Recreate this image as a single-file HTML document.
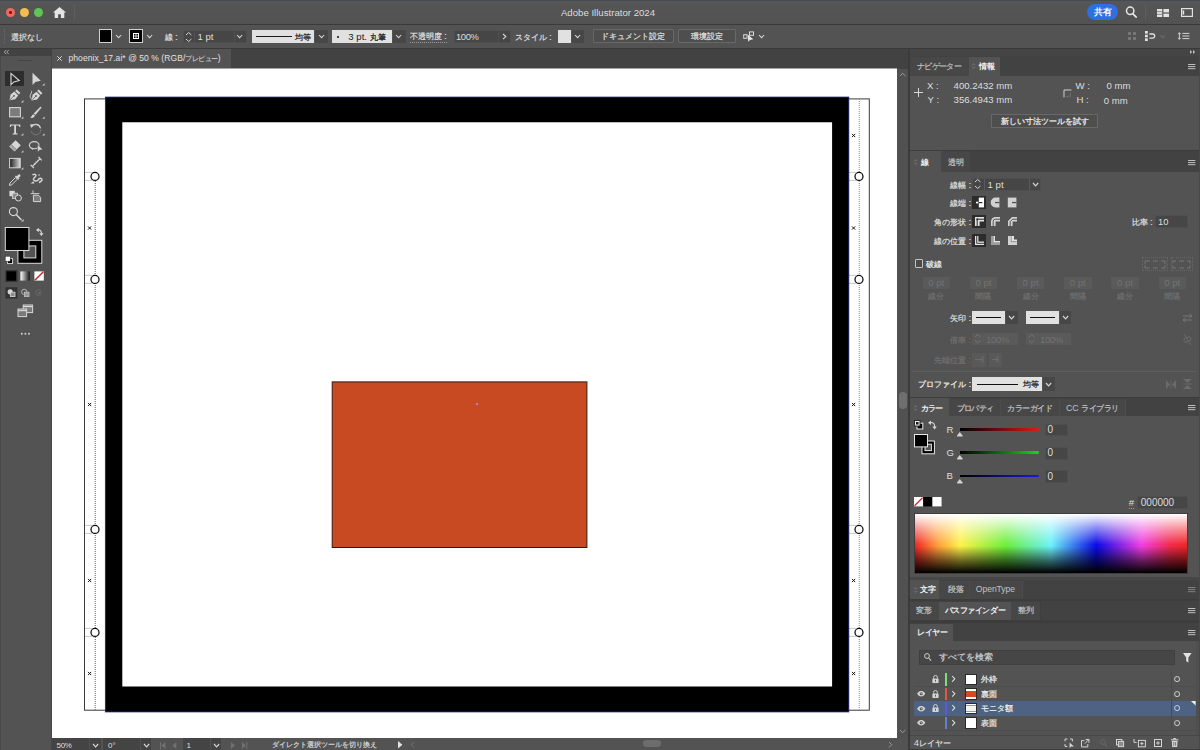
<!DOCTYPE html>
<html lang="ja">
<head>
<meta charset="utf-8">
<title>Adobe Illustrator 2024</title>
<style>
html,body{margin:0;padding:0;background:#535353;}
body{width:1200px;height:750px;overflow:hidden;position:relative;font-family:"Liberation Sans",sans-serif;font-size:9.6px;color:#dedede;line-height:1;}
#app{position:absolute;left:0;top:0;width:1200px;height:750px;overflow:hidden;background:#535353;}
.a{position:absolute;}
.t{position:absolute;white-space:nowrap;line-height:12px;height:12px;color:#dedede;}
.dim{color:#7a7a7a;}
.j{font-size:8.3px;-webkit-text-stroke:.22px;}
.b{font-weight:bold;-webkit-text-stroke:0 !important;}
.fld{position:absolute;background:#464646;border:1px solid #4f4f4f;box-sizing:border-box;}
.lt{position:absolute;background:#e1e1e1;}
.btn{position:absolute;box-sizing:border-box;border:1px solid #686868;background:#4e4e4e;}
.bar{position:absolute;background:#424242;}
.tab{position:absolute;background:#535353;}
svg{position:absolute;overflow:visible;}
.chev{position:absolute;width:5px;height:5px;}
</style>
</head>
<body>
<div id="app">

<!-- ===== TITLE BAR ===== -->
<div id="titlebar" class="a" style="left:0;top:0;width:1200px;height:24px;background:linear-gradient(#565656,#525252);">
  <div class="a" style="left:0;top:0;width:1200px;height:1px;background:#474c54;"></div>
  <!-- traffic lights -->
  <div class="a" style="left:6px;top:8px;width:9px;height:9px;border-radius:50%;background:#ee6a5f;"></div>
  <div class="a" style="left:9.4px;top:11.4px;width:2.2px;height:2.2px;border-radius:50%;background:#8a1208;"></div>
  <div class="a" style="left:20px;top:8px;width:9px;height:9px;border-radius:50%;background:#f5bd4f;"></div>
  <div class="a" style="left:34px;top:8px;width:9px;height:9px;border-radius:50%;background:#61c454;"></div>
  <!-- home -->
  <svg style="left:53px;top:7px;" width="13" height="11" viewBox="0 0 13 11"><path d="M6.5 0 L13 5.4 L11.3 5.4 L11.3 11 L7.9 11 L7.9 7.2 L5.1 7.2 L5.1 11 L1.7 11 L1.7 5.4 L0 5.4 Z" fill="#e4e4e4"/></svg>
  <div class="a" style="left:74px;top:5px;width:1px;height:15px;background:#5e5e5e;"></div>
  <div class="t" style="left:500px;width:216px;top:6.5px;text-align:center;font-size:9.65px;color:#dcdcdc;">Adobe Illustrator 2024</div>
  <!-- share -->
  <div class="a" style="left:1087px;top:4px;width:31px;height:16px;border-radius:8px;background:#2f6fe0;"></div>
  <div class="t b j" style="left:1087px;width:31px;top:6px;text-align:center;color:#fff;font-size:8.6px;">共有</div>
  <!-- search -->
  <svg style="left:1124px;top:5px;" width="16" height="15" viewBox="0 0 16 15"><circle cx="6.2" cy="5.8" r="3.7" fill="none" stroke="#e6e6e6" stroke-width="1.5"/><path d="M9 8.8 L12.2 12.2" stroke="#e6e6e6" stroke-width="1.7" stroke-linecap="round"/></svg>
  <div class="a" style="left:1145px;top:4px;width:1px;height:16px;background:#5e5e5e;"></div>
  <!-- workspace grid -->
  <svg style="left:1157px;top:8.5px;" width="12" height="8" viewBox="0 0 12 8"><rect x="0" y="0" width="5.2" height="8" fill="#e2e2e2"/><rect x="6.4" y="0" width="5.6" height="3.4" fill="#e2e2e2"/><rect x="6.4" y="4.6" width="5.6" height="3.4" fill="#e2e2e2"/><path d="M0 2.6H5.2M0 5.3H5.2" stroke="#545454" stroke-width=".6"/></svg>
  <!-- panel icon -->
  <svg style="left:1181px;top:8px;" width="12" height="9" viewBox="0 0 12 9"><rect x=".6" y=".6" width="10.8" height="7.8" fill="none" stroke="#e2e2e2" stroke-width="1.2"/><rect x="1.6" y="2.4" width="1.6" height="4.2" fill="#e2e2e2"/></svg>
</div>
<div class="a" style="left:0;top:24px;width:1200px;height:1px;background:#3a3a3a;"></div>

<!-- ===== CONTROL BAR ===== -->
<div id="controlbar" class="a" style="left:0;top:25px;width:1200px;height:23px;background:#535353;">
<!--S:control-->
<div class="a" style="left:4px;top:4px;width:1px;height:15px;background:repeating-linear-gradient(#6a6a6a 0 1px,transparent 1px 2px);"></div>
<div class="t j" style="left:10.5px;top:5.60px;">選択なし</div>
<div class="a" style="left:98.7px;top:4.2px;width:13.8px;height:13.6px;background:#000;box-sizing:border-box;border:1px solid #d0d0d0;"></div>
<svg style="left:116.00px;top:10.05px" width="5.2" height="2.7" viewBox="0 0 5.2 2.7"><path d="M0 0L2.6 2.7L5.2 0" fill="none" stroke="#d6d6d6" stroke-width="1.05"/></svg>
<div class="a" style="left:129.4px;top:4.2px;width:13.6px;height:13.6px;background:#000;box-sizing:border-box;border:1px solid #d0d0d0;"></div>
<svg style="left:133.2px;top:8px" width="6" height="6" viewBox="0 0 6 6"><rect x=".5" y=".5" width="5" height="5" fill="none" stroke="#fff" stroke-width="1"/><path d="M3 .5V5.5M.5 3H5.5" stroke="#fff" stroke-width=".8"/></svg>
<svg style="left:147.00px;top:10.05px" width="5.2" height="2.7" viewBox="0 0 5.2 2.7"><path d="M0 0L2.6 2.7L5.2 0" fill="none" stroke="#d6d6d6" stroke-width="1.05"/></svg>
<div class="t j" style="left:165px;top:5.60px;">線 :</div>
<div class="fld" style="left:183px;top:5px;width:63.5px;height:13.4px;"></div>
<div class="a" style="left:194px;top:6px;width:1px;height:11.4px;background:#525252;"></div>
<div class="a" style="left:233.5px;top:6px;width:1px;height:11.4px;background:#525252;"></div>
<svg style="left:185.6px;top:6.8px" width="5.4" height="10" viewBox="0 0 5.4 10"><path d="M0 3L2.7 .5L5.4 3M0 7L2.7 9.5L5.4 7" fill="none" stroke="#d6d6d6" stroke-width="1"/></svg>
<div class="t" style="left:197.5px;top:6.00px;font-size:9.6px;">1 pt</div>
<svg style="left:237.40px;top:10.05px" width="5.2" height="2.7" viewBox="0 0 5.2 2.7"><path d="M0 0L2.6 2.7L5.2 0" fill="none" stroke="#d6d6d6" stroke-width="1.05"/></svg>
<div class="lt" style="left:251.6px;top:5px;width:62.8px;height:13.2px;"></div>
<div class="a" style="left:256px;top:11.1px;width:35.5px;height:1.3px;background:#1a1a1a;"></div>
<div class="t j" style="left:295px;top:5.80px;color:#1c1c1c;">均等</div>
<div class="a" style="left:315.4px;top:5px;width:13px;height:13.2px;background:#474747;"></div>
<svg style="left:318.90px;top:10.05px" width="5.2" height="2.7" viewBox="0 0 5.2 2.7"><path d="M0 0L2.6 2.7L5.2 0" fill="none" stroke="#d6d6d6" stroke-width="1.05"/></svg>
<div class="lt" style="left:331.9px;top:5px;width:60px;height:13.2px;"></div>
<div class="a" style="left:337.2px;top:10.6px;width:2px;height:2px;border-radius:50%;background:#111;"></div>
<div class="t" style="left:348.3px;top:5.80px;color:#1c1c1c;font-size:9.6px;">3 pt. <span class="j">丸筆</span></div>
<div class="a" style="left:392.9px;top:5px;width:13px;height:13.2px;background:#474747;"></div>
<svg style="left:396.40px;top:10.05px" width="5.2" height="2.7" viewBox="0 0 5.2 2.7"><path d="M0 0L2.6 2.7L5.2 0" fill="none" stroke="#d6d6d6" stroke-width="1.05"/></svg>
<div class="t j" style="left:410px;top:5.60px;border-bottom:1px dotted #9a9a9a;height:11.4px;line-height:11.4px;">不透明度 :</div>
<div class="fld" style="left:453.7px;top:5px;width:57px;height:13.4px;"></div>
<div class="a" style="left:497.5px;top:6px;width:1px;height:11.4px;background:#525252;"></div>
<div class="t" style="left:456px;top:6.00px;font-size:9.4px;letter-spacing:-.35px;">100%</div>
<svg style="left:502.90px;top:8.80px" width="2.8" height="5.2" viewBox="0 0 2.8 5.2"><path d="M0 0L2.8 2.6L0 5.2" fill="none" stroke="#d6d6d6" stroke-width="1.15"/></svg>
<div class="t j" style="left:515px;top:5.60px;">スタイル :</div>
<div class="lt" style="left:557.7px;top:5px;width:13.6px;height:13.2px;"></div>
<div class="a" style="left:572.3px;top:5px;width:12px;height:13.2px;background:#474747;"></div>
<svg style="left:575.30px;top:10.05px" width="5.2" height="2.7" viewBox="0 0 5.2 2.7"><path d="M0 0L2.6 2.7L5.2 0" fill="none" stroke="#d6d6d6" stroke-width="1.05"/></svg>
<div class="btn" style="left:592.5px;top:4.3px;width:81.3px;height:14px;border-radius:1px;"></div>
<div class="t j" style="left:592.5px;top:5.30px;width:81.3px;text-align:center;">ドキュメント設定</div>
<div class="btn" style="left:677.5px;top:4.3px;width:58.2px;height:14px;border-radius:1px;"></div>
<div class="t j" style="left:677.5px;top:5.30px;width:58.2px;text-align:center;">環境設定</div>
<svg style="left:743px;top:5.6px" width="13" height="12" viewBox="743 30.6 13 12"><rect x="743.7" y="34.3" width="3.3" height="3.6" fill="none" stroke="#d8d8d8" stroke-width="1"/><rect x="749.5" y="31.5" width="4" height="3.4" fill="none" stroke="#d8d8d8" stroke-width="1"/><path d="M747.7 34.2L748.2 41.4L750 39.6L753.3 38.9Z" fill="#e4e4e4"/></svg>
<svg style="left:759.20px;top:9.55px" width="5.2" height="2.7" viewBox="0 0 5.2 2.7"><path d="M0 0L2.6 2.7L5.2 0" fill="none" stroke="#d6d6d6" stroke-width="1.05"/></svg>
<svg style="left:1127.8px;top:7px" width="8" height="8" viewBox="0 0 8 8"><g fill="#767676"><rect x="0" y="0" width="3" height="3"/><rect x="5" y="0" width="3" height="3"/><rect x="0" y="5" width="3" height="3"/><rect x="5" y="5" width="3" height="3"/></g></svg>
<svg style="left:1144.6px;top:6px" width="11" height="11" viewBox="0 0 11 11"><g fill="#e2e2e2"><rect x="0" y="0" width="2.8" height="2.6"/><rect x="0" y="3.7" width="2.8" height="2.6"/><rect x="0" y="7.4" width="2.8" height="2.6"/></g><path d="M4.4 3H7.6A2.1 2.1 0 0 1 7.6 7.2H4.4" fill="none" stroke="#e2e2e2" stroke-width="1.3"/></svg>
<svg style="left:1160.40px;top:9.95px" width="5.2" height="2.7" viewBox="0 0 5.2 2.7"><path d="M0 0L2.6 2.7L5.2 0" fill="none" stroke="#6c6c6c" stroke-width="1.05"/></svg>
<svg style="left:1177px;top:6.6px" width="13" height="9" viewBox="1177 31.6 13 9"><path d="M1182.4 33H1189.4M1182.4 35.6H1189.4M1182.4 38.2H1189.4" stroke="#dcdcdc" stroke-width=".95"/><path d="M1179.4 32.4V38.8" stroke="#dcdcdc" stroke-width=".9"/><path d="M1178 33.8L1179.4 32.2L1180.8 33.8M1178 37.4L1179.4 39L1180.8 37.4" fill="none" stroke="#dcdcdc" stroke-width=".8"/></svg>
<!--E:control-->
</div>
<div class="a" style="left:0;top:48px;width:1200px;height:1px;background:#3a3a3a;"></div>

<!-- ===== TOOLS PANEL ===== -->
<div id="tools" class="a" style="left:0;top:49px;width:52px;height:701px;background:#535353;">
<!--S:tools-->
<div class="a" style="left:0;top:0;width:52px;height:7.4px;background:#424242;"></div>
<svg style="left:4.2px;top:1.4px" width="5" height="4.2" viewBox="0 0 5 4.2"><path d="M2.2 0L.3 2.1L2.2 4.2M4.7 0L2.8 2.1L4.7 4.2" fill="none" stroke="#bdbdbd" stroke-width=".8"/></svg>
<div class="a" style="left:0;top:7.4px;width:1px;height:694px;background:#494949;"></div>
<div class="a" style="left:50.6px;top:7.4px;width:1.4px;height:694px;background:#484848;"></div>
<div class="a" style="left:18.4px;top:10.6px;width:13.4px;height:1.8px;background:#454545;"></div>
<div class="a" style="left:5.2px;top:22.4px;width:19px;height:14.6px;background:#2d2d2d;"></div>
<svg style="left:0;top:0" width="52" height="701" viewBox="0 49 52 701"><defs><linearGradient id="tg" x1="0" x2="1" y1="0" y2="0"><stop offset="0" stop-color="#1a1a1a"/><stop offset="1" stop-color="#d8d8d8"/></linearGradient><linearGradient id="tg2" x1="0" x2="1" y1="0" y2="0"><stop offset="0" stop-color="#fff"/><stop offset="1" stop-color="#111"/></linearGradient></defs><path d="M11 73.4V84.7L13.9 81.9L19.2 80.5Z" fill="none" stroke="#d6d6d6" stroke-width="1.15" stroke-linejoin="miter"/>
<path d="M32.5 72.8V84.9L35.4 82L40.8 80.7Z" fill="#d6d6d6"/>
<path d="M44.6 85.6L44.6 83.19999999999999L42.2 85.6Z" fill="#cfcfcf"/>
<g transform="translate(0 0)"><path d="M9.5 100.3L10.6 94.6L14.4 91.6L18.2 95.4L15.2 99.2Z" fill="#d6d6d6"/><path d="M15.2 90.9L16.7 89.4L20.4 93.1L18.9 94.6Z" fill="#d6d6d6"/><path d="M9.9 99.9L13.6 96.2" stroke="#535353" stroke-width=".8"/><circle cx="14" cy="95.8" r=".9" fill="#535353"/></g>
<path d="M23.4 102.4L23.4 100.0L21.0 102.4Z" fill="#cfcfcf"/>
<g transform="translate(22 0.2)"><path d="M9.5 100.3L10.6 94.6L14.4 91.6L18.2 95.4L15.2 99.2Z" fill="#d6d6d6"/><path d="M15.2 90.9L16.7 89.4L20.4 93.1L18.9 94.6Z" fill="#d6d6d6"/><path d="M9.9 99.9L13.6 96.2" stroke="#535353" stroke-width=".8"/><circle cx="14" cy="95.8" r=".9" fill="#535353"/></g>
<path d="M31.2 90.8C33 92.4 29 95 30.4 97.4C31 98.6 31.8 99 32.2 99.6" fill="none" stroke="#d6d6d6" stroke-width="1"/>
<rect x="9.6" y="107.6" width="10.8" height="9.2" fill="#7b7b7b" stroke="#d6d6d6" stroke-width="1.1"/>
<path d="M23.4 118.8L23.4 116.39999999999999L21.0 118.8Z" fill="#cfcfcf"/>
<path d="M40.6 106.6L41.6 107.6L35.4 115L33.8 113.6Z" fill="#d6d6d6"/><path d="M33.4 114.2L34.9 115.6C34.4 117.6 32.4 118.4 30.4 117.8C31.6 117 31.6 115 33.4 114.2Z" fill="#d6d6d6"/>
<path d="M44.6 118.8L44.6 116.39999999999999L42.2 118.8Z" fill="#cfcfcf"/>
<path d="M9.9 124.4H20.3V127H19.3C19.1 125.9 18.6 125.6 17.6 125.6H16V132.6C16 133.3 16.4 133.5 17.6 133.6V134.4H12.6V133.6C13.8 133.5 14.2 133.3 14.2 132.6V125.6H12.6C11.6 125.6 11.1 125.9 10.9 127H9.9Z" fill="#d6d6d6"/>
<path d="M23.4 135.6L23.4 133.2L21.0 135.6Z" fill="#cfcfcf"/>
<path d="M32.6 126.6A4.8 4.8 0 1 1 31.3 131" fill="none" stroke="#9a9a9a" stroke-width="1" stroke-dasharray="1.2 1"/><path d="M31.6 126.4A4.9 4.9 0 0 1 40.4 128" fill="none" stroke="#d6d6d6" stroke-width="1.2"/><path d="M30.2 124.2L34.2 124.6L31 128Z" fill="#d6d6d6"/>
<path d="M44.6 135.6L44.6 133.2L42.2 135.6Z" fill="#cfcfcf"/>
<path d="M15.6 140.2L20.8 145.2L14.6 151.6L9.2 146.6Z" fill="#d6d6d6"/><path d="M11.2 144.8L16.4 149.8" stroke="#535353" stroke-width=".9"/><path d="M9.9 146.6L14.6 151L16 149.6L11.3 145.2Z" fill="#a8a8a8"/>
<path d="M23.4 152.6L23.4 150.2L21.0 152.6Z" fill="#cfcfcf"/>
<ellipse cx="34.2" cy="145.2" rx="4.8" ry="3.6" fill="none" stroke="#d6d6d6" stroke-width="1.1"/><path d="M31.8 147.6C31 148.6 31.8 149.6 33 149.2" fill="none" stroke="#d6d6d6" stroke-width=".9"/><path d="M37.6 144.6V152L39.4 150.2L42.8 149.6Z" fill="#d6d6d6" stroke="#535353" stroke-width=".5"/>
<rect x="9.6" y="158.4" width="10.6" height="9.4" fill="url(#tg)" stroke="#d6d6d6" stroke-width="1"/>
<path d="M23.4 169.6L23.4 167.2L21.0 169.6Z" fill="#cfcfcf"/>
<path d="M32.2 166.6L40.2 158.6" stroke="#d6d6d6" stroke-width="1.3"/><path d="M30.6 164.8L34 168.2M38.4 157L41.8 160.4" stroke="#d6d6d6" stroke-width="1.2"/><path d="M34 163L35.2 164.2M35.6 161.4L36.8 162.6M37.2 159.8L38.4 161" stroke="#d6d6d6" stroke-width=".7"/>
<path d="M9.4 185.4L10 183L15.4 177.6L17.2 179.4L11.8 184.8Z" fill="none" stroke="#d6d6d6" stroke-width="1"/><path d="M15 176.4L18.4 179.8L19.4 178.8L18.6 178L20.4 176.2C21 175.4 19.6 173.6 18.6 174.4L16.8 176.2L16 175.4Z" fill="#d6d6d6"/>
<path d="M33 174.6C35 173.4 36.6 175 35.6 176.4C34.4 178 33.2 178.2 33.4 179.4C33.8 181.4 37.4 181.6 38.6 179.4C39.4 178 41.8 177.8 42 179.6C42.2 181.4 40 181.4 39.6 182.4" fill="none" stroke="#d6d6d6" stroke-width="1.5" stroke-linecap="round"/><path d="M30.4 183.6L33.6 181.2L34.4 183.4Z" fill="#d6d6d6"/><circle cx="39" cy="175" r=".8" fill="#d6d6d6"/>
<rect x="9.4" y="190.8" width="5.4" height="5.4" fill="#d6d6d6"/><rect x="12.4" y="193.2" width="5.2" height="5.2" fill="#8a8a8a" stroke="#d6d6d6" stroke-width=".8"/><circle cx="18.4" cy="198" r="3" fill="#535353" stroke="#d6d6d6" stroke-width="1"/>
<path d="M30.6 193.6H39.4M33 190.4V193.6" stroke="#d6d6d6" stroke-width=".9"/><path d="M33.4 195.2H38.4L40.6 197.4V201.6H33.4Z" fill="#7d7d7d" stroke="#d6d6d6" stroke-width="1"/>
<circle cx="13.4" cy="211.6" r="4" fill="none" stroke="#d6d6d6" stroke-width="1.15"/><path d="M16.4 214.8L21 219.6" stroke="#d6d6d6" stroke-width="1.5" stroke-linecap="round"/>
<path d="M23.6 221.4L23.6 219.0L21.200000000000003 221.4Z" fill="#cfcfcf"/>
<rect x="17.9" y="240.3" width="23.9" height="23" fill="#000" stroke="#dadada" stroke-width="1"/><rect x="23.9" y="245.9" width="11.9" height="12" fill="#535353" stroke="#dadada" stroke-width="1"/>
<rect x="5.3" y="227.5" width="23.6" height="23" fill="#000" stroke="#dadada" stroke-width="1"/>
<path d="M37.6 230C40.6 229.6 41.6 231.4 41.4 233.6" fill="none" stroke="#d6d6d6" stroke-width="1.2"/><path d="M36 230L38.8 227.8V232.2Z" fill="#d6d6d6"/><path d="M41.4 236L39.2 233.2H43.6Z" fill="#d6d6d6"/>
<rect x="7.6" y="258.6" width="5" height="5" fill="#000" stroke="#e0e0e0" stroke-width=".9"/><rect x="5.2" y="256.2" width="5" height="5" fill="#fff" stroke="#222" stroke-width=".5"/>
<rect x="5.4" y="270.2" width="12" height="11.6" fill="#2f2f2f"/><rect x="6.6" y="271.4" width="9.4" height="9.2" fill="#000"/>
<rect x="20.4" y="271.4" width="9.4" height="9.2" fill="url(#tg2)"/>
<rect x="34.4" y="271.4" width="9.4" height="9.2" fill="#fff"/><path d="M34.8 280.2L43.4 271.8" stroke="#d02020" stroke-width="1.4"/>
<rect x="5.4" y="287.2" width="12" height="11.4" fill="#333"/>
<circle cx="10.2" cy="291.8" r="2.6" fill="#d6d6d6"/><rect x="10.4" y="292.2" width="4.6" height="4.4" fill="#8c8c8c" stroke="#d6d6d6" stroke-width=".8"/>
<circle cx="24.2" cy="291.8" r="2.6" fill="none" stroke="#bdbdbd" stroke-width=".9"/><rect x="24.4" y="292.2" width="4.6" height="4.4" fill="#9a9a9a" stroke="#bdbdbd" stroke-width=".8"/>
<circle cx="38.4" cy="292.6" r="2.8" fill="none" stroke="#6a6a6a" stroke-width=".9"/><circle cx="39.2" cy="293" r="1.2" fill="#666"/>
<rect x="23.2" y="305" width="9.4" height="7.6" fill="#7a7a7a" stroke="#d6d6d6" stroke-width="1"/><path d="M23.2 306.6H32.6" stroke="#d6d6d6" stroke-width="1.2"/><rect x="18" y="309" width="8.6" height="7.6" fill="#7a7a7a" stroke="#d6d6d6" stroke-width="1"/><path d="M18 310.6H26.6" stroke="#d6d6d6" stroke-width="1.2"/>
<circle cx="21.8" cy="333.8" r=".95" fill="#d6d6d6"/>
<circle cx="25.4" cy="333.8" r=".95" fill="#d6d6d6"/>
<circle cx="29" cy="333.8" r=".95" fill="#d6d6d6"/></svg>
<!--E:tools-->
</div>

<!-- ===== DOCUMENT AREA ===== -->
<div id="doctabs" class="bar" style="left:52px;top:49px;width:856px;height:20px;">
<!--S:doctabs-->
<div class="tab" style="left:0;top:0;width:178.6px;height:20px;"></div>
<svg style="left:5.4px;top:7px" width="5" height="5" viewBox="0 0 5 5"><path d="M.3 .3L4.7 4.7M4.7 .3L.3 4.7" stroke="#e0e0e0" stroke-width="1"/></svg>
<div class="t" style="left:16.5px;top:3.4px;font-size:8.5px;letter-spacing:.07px;color:#e2e2e2;">phoenix_17.ai* @ 50 % (RGB/<span style="font-size:7.4px;letter-spacing:-.5px;">プレビュー</span>)</div>
<!--E:doctabs-->
</div>
<!--S:docchrome-->
<div class="a" style="left:52px;top:68px;width:845px;height:1px;background:#a4a4a4;"></div>
<div class="a" style="left:897px;top:69px;width:11px;height:669px;background:#515151;"></div>
<svg style="left:899.8px;top:73.4px" width="5.4" height="3" viewBox="0 0 5.4 3"><path d="M0 3L2.7 .3L5.4 3" fill="none" stroke="#9a9a9a" stroke-width="1"/></svg>
<svg style="left:900.2px;top:729.6px" width="5.4" height="3" viewBox="0 0 5.4 3"><path d="M0 0L2.7 2.7L5.4 0" fill="none" stroke="#9a9a9a" stroke-width="1"/></svg>
<div class="a" style="left:898.6px;top:392px;width:8px;height:17px;border-radius:4px;background:#6f6f6f;"></div>
<div class="a" style="left:52px;top:738px;width:856px;height:12px;background:#535353;"></div>
<div class="a" style="left:52px;top:738px;width:49px;height:12px;background:#444;"></div>
<div class="a" style="left:103px;top:738px;width:48px;height:12px;background:#444;"></div>
<div class="a" style="left:182.5px;top:738px;width:38.5px;height:12px;background:#444;"></div>
<div class="a" style="left:88.5px;top:738px;width:1px;height:12px;background:#505050;"></div>
<div class="a" style="left:140px;top:738px;width:1px;height:12px;background:#505050;"></div>
<div class="a" style="left:210px;top:738px;width:1px;height:12px;background:#505050;"></div>
<div class="t" style="left:56.5px;top:739.8px;font-size:8px;letter-spacing:-.3px;">50%</div>
<svg style="left:93.20px;top:744.00px" width="5.2" height="2.8" viewBox="0 0 5.2 2.8"><path d="M0 0L2.6 2.8L5.2 0" fill="none" stroke="#d6d6d6" stroke-width="1.15"/></svg>
<div class="t" style="left:108px;top:739.8px;font-size:8px;">0°</div>
<svg style="left:144.20px;top:744.00px" width="5.2" height="2.8" viewBox="0 0 5.2 2.8"><path d="M0 0L2.6 2.8L5.2 0" fill="none" stroke="#d6d6d6" stroke-width="1.15"/></svg>
<div class="t" style="left:186.6px;top:739.8px;font-size:8px;">1</div>
<svg style="left:214.40px;top:744.00px" width="5.2" height="2.8" viewBox="0 0 5.2 2.8"><path d="M0 0L2.6 2.8L5.2 0" fill="none" stroke="#d6d6d6" stroke-width="1.15"/></svg>
<svg style="left:160px;top:742px" width="18" height="7" viewBox="0 0 18 7"><g fill="#707070"><rect x="0" y="0" width="1" height="7"/><path d="M5.4 0V7L1.4 3.5Z"/><path d="M16.4 0V7L12.4 3.5Z"/></g></svg>
<svg style="left:230px;top:742px" width="18" height="7" viewBox="0 0 18 7"><g fill="#707070"><path d="M1 0V7L5 3.5Z"/><path d="M12 0V7L16 3.5Z"/><rect x="16.4" y="0" width="1" height="7"/></g></svg>
<div class="t j" style="left:271.5px;top:739.2px;font-size:6.9px;color:#d2d2d2;">ダイレクト選択ツールを切り換え</div>
<svg style="left:397.6px;top:741.4px" width="4.4" height="7.4" viewBox="0 0 4.4 7.4"><path d="M0 0V7.4L4.4 3.7Z" fill="#e4e4e4"/></svg>
<svg style="left:410.6px;top:742.4px" width="3" height="5.4" viewBox="0 0 3 5.4"><path d="M3 0L.3 2.7L3 5.4" fill="none" stroke="#727272" stroke-width="1"/></svg>
<div class="a" style="left:642.5px;top:740px;width:18px;height:7.4px;border-radius:3.7px;background:#6d6d6d;"></div>
<svg style="left:888.6px;top:741.6px" width="3" height="5.4" viewBox="0 0 3 5.4"><path d="M0 0L2.7 2.7L0 5.4" fill="none" stroke="#9a9a9a" stroke-width="1"/></svg>
<!--E:docchrome-->
<div id="canvas" class="a" style="left:52px;top:69px;width:845px;height:669px;background:#fff;overflow:hidden;">
<svg style="left:0;top:0;" width="845" height="667" viewBox="0 0 845 667">
<rect x="32.5" y="29.900000000000006" width="784.8" height="611.3000000000001" fill="none" stroke="#3a3a3a" stroke-width="1"/>
<path d="M43.2 108V641" stroke="#6c6c6c" stroke-width="1.1" stroke-dasharray="1 1"/>
<path d="M807.3 30V641" stroke="#93a2a4" stroke-width="1.2" stroke-dasharray="1 1"/>
<path d="M33.5 103.4H40" stroke="#777" stroke-width=".8" stroke-dasharray="1 1"/>
<path d="M797.5 103.4H804" stroke="#777" stroke-width=".8" stroke-dasharray="1 1"/>
<path d="M33.5 111.4H40" stroke="#777" stroke-width=".8" stroke-dasharray="1 1"/>
<path d="M797.5 111.4H804" stroke="#777" stroke-width=".8" stroke-dasharray="1 1"/>
<path d="M33.5 206.39999999999998H40" stroke="#777" stroke-width=".8" stroke-dasharray="1 1"/>
<path d="M797.5 206.39999999999998H804" stroke="#777" stroke-width=".8" stroke-dasharray="1 1"/>
<path d="M33.5 214.39999999999998H40" stroke="#777" stroke-width=".8" stroke-dasharray="1 1"/>
<path d="M797.5 214.39999999999998H804" stroke="#777" stroke-width=".8" stroke-dasharray="1 1"/>
<path d="M33.5 456.4H40" stroke="#777" stroke-width=".8" stroke-dasharray="1 1"/>
<path d="M797.5 456.4H804" stroke="#777" stroke-width=".8" stroke-dasharray="1 1"/>
<path d="M33.5 464.4H40" stroke="#777" stroke-width=".8" stroke-dasharray="1 1"/>
<path d="M797.5 464.4H804" stroke="#777" stroke-width=".8" stroke-dasharray="1 1"/>
<path d="M33.5 559.4H40" stroke="#777" stroke-width=".8" stroke-dasharray="1 1"/>
<path d="M797.5 559.4H804" stroke="#777" stroke-width=".8" stroke-dasharray="1 1"/>
<path d="M33.5 567.4H40" stroke="#777" stroke-width=".8" stroke-dasharray="1 1"/>
<path d="M797.5 567.4H804" stroke="#777" stroke-width=".8" stroke-dasharray="1 1"/>
<path fill-rule="evenodd" fill="#000" d="M53.30 28.00H796.90V643.00H53.30Z M70.30 53.30H780.10V617.40H70.30Z"/>
<rect x="53.40" y="28.10" width="743.40" height="614.80" fill="none" stroke="#23297a" stroke-width=".9"/>
<circle cx="43" cy="107.4" r="4" fill="#fff" stroke="#0a0a0a" stroke-width="1.25"/>
<circle cx="807" cy="107.4" r="4" fill="#fff" stroke="#0a0a0a" stroke-width="1.25"/>
<circle cx="43" cy="210.39999999999998" r="4" fill="#fff" stroke="#0a0a0a" stroke-width="1.25"/>
<circle cx="807" cy="210.39999999999998" r="4" fill="#fff" stroke="#0a0a0a" stroke-width="1.25"/>
<circle cx="43" cy="460.4" r="4" fill="#fff" stroke="#0a0a0a" stroke-width="1.25"/>
<circle cx="807" cy="460.4" r="4" fill="#fff" stroke="#0a0a0a" stroke-width="1.25"/>
<circle cx="43" cy="563.4" r="4" fill="#fff" stroke="#0a0a0a" stroke-width="1.25"/>
<circle cx="807" cy="563.4" r="4" fill="#fff" stroke="#0a0a0a" stroke-width="1.25"/>
<path d="M35.99999999999999 157.4L39.199999999999996 160.6M39.199999999999996 157.4L35.99999999999999 160.6" stroke="#111" stroke-width="1"/>
<path d="M35.99999999999999 333.9L39.199999999999996 337.1M39.199999999999996 333.9L35.99999999999999 337.1" stroke="#111" stroke-width="1"/>
<path d="M35.99999999999999 509.9L39.199999999999996 513.1M39.199999999999996 509.9L35.99999999999999 513.1" stroke="#111" stroke-width="1"/>
<path d="M35.99999999999999 602.9L39.199999999999996 606.1M39.199999999999996 602.9L35.99999999999999 606.1" stroke="#111" stroke-width="1"/>
<path d="M800.0 64.9L803.2 68.1M803.2 64.9L800.0 68.1" stroke="#111" stroke-width="1"/>
<path d="M800.0 157.4L803.2 160.6M803.2 157.4L800.0 160.6" stroke="#111" stroke-width="1"/>
<path d="M800.0 333.9L803.2 337.1M803.2 333.9L800.0 337.1" stroke="#111" stroke-width="1"/>
<path d="M800.0 509.9L803.2 513.1M803.2 509.9L800.0 513.1" stroke="#111" stroke-width="1"/>
<path d="M800.0 602.9L803.2 606.1M803.2 602.9L800.0 606.1" stroke="#111" stroke-width="1"/>
<rect x="280.2" y="312.9" width="254.7" height="165.60000000000002" fill="#c74a22" stroke="#3a160a" stroke-width="1"/>
<circle cx="425.1" cy="335.2" r="1.1" fill="#a88ad0"/>
</svg>
</div>

<!-- ===== RIGHT DOCK ===== -->
<div id="dock" class="a" style="left:908px;top:49px;width:292px;height:701px;background:#535353;">
<!--S:dock-->
<div class="a" style="left:0.00px;top:0.00px;width:2.00px;height:701.00px;background:#3b3b3b;"></div>
<div class="a" style="left:291.00px;top:0.00px;width:1.00px;height:701.00px;background:#484848;"></div>
<div class="a" style="left:2.00px;top:0.00px;width:289.00px;height:7.00px;background:#454545;"></div>
<svg style="left:282.00px;top:1.40px" width="5.4" height="4" viewBox="0 0 5.4 4"><path d="M0 0L2.2 2L0 4ZM3 0L5.2 2L3 4Z" fill="#bdbdbd"/></svg>
<div class="a" style="left:2.00px;top:7.00px;width:289.00px;height:19.50px;background:#424242;"></div>
<div class="a" style="left:2.00px;top:8.00px;width:58.50px;height:18.50px;background:#474747;"></div>
<div class="a" style="left:60.50px;top:8.00px;width:31.30px;height:18.50px;background:#535353;"></div>
<div class="t j" style="left:9.00px;top:11.20px;color:#bdbdbd;letter-spacing:-.67px;">ナビゲーター</div>
<svg style="left:63.80px;top:14.20px" width="3.2" height="6" viewBox="0 0 3.2 6"><path d="M.3 2.2L1.6 .6L2.9 2.2M.3 3.8L1.6 5.4L2.9 3.8" fill="none" stroke="#8e8e8e" stroke-width=".6"/></svg>
<div class="t j b" style="left:70.60px;top:11.20px;color:#f0f0f0;">情報</div>
<svg style="left:280.00px;top:15.00px" width="7.4" height="5.2" viewBox="0 0 7.4 5.2"><path d="M0 .5H7.4M0 2.6H7.4M0 4.7H7.4" stroke="#cfcfcf" stroke-width=".9"/></svg>
<svg style="left:6.00px;top:39.00px" width="9" height="9" viewBox="0 0 9 9"><path d="M4.5 0V9M0 4.5H9" stroke="#d8d8d8" stroke-width="1"/></svg>
<div class="t" style="left:19.00px;top:30.70px;">X :</div>
<div class="t" style="left:19.60px;top:44.50px;">Y :</div>
<div class="t" style="left:45.60px;top:30.70px;">400.2432 mm</div>
<div class="t" style="left:45.60px;top:44.50px;">356.4943 mm</div>
<svg style="left:154.60px;top:39.60px" width="8.4" height="8.4" viewBox="0 0 8.4 8.4"><path d="M1 8.4V1H8.4" fill="none" stroke="#d0d0d0" stroke-width="1"/><path d="M3.4 7.4H7.4V3.4" fill="none" stroke="#9a9a9a" stroke-width=".7" stroke-dasharray="1 1"/></svg>
<div class="t" style="left:167.60px;top:30.70px;">W :</div>
<div class="t" style="left:168.40px;top:45.40px;">H :</div>
<div class="t" style="left:198.60px;top:30.90px;">0 mm</div>
<div class="t" style="left:195.80px;top:45.60px;">0 mm</div>
<div class="btn" style="left:83.20px;top:64.60px;width:106.60px;height:14.00px;"></div>
<div class="t j" style="left:76.50px;width:120px;text-align:center;top:65.70px;color:#f0f0f0;font-size:8.4px;">新しい寸法ツールを試す</div>
<div class="a" style="left:2.00px;top:101.00px;width:289.00px;height:1.40px;background:#3d3d3d;"></div>
<div class="a" style="left:2.00px;top:102.40px;width:289.00px;height:20.20px;background:#424242;"></div>
<div class="a" style="left:33.40px;top:102.40px;width:28.90px;height:20.20px;background:#474747;"></div>
<div class="a" style="left:2.00px;top:102.00px;width:31.40px;height:20.60px;background:#535353;"></div>
<svg style="left:6.00px;top:109.80px" width="3.2" height="6" viewBox="0 0 3.2 6"><path d="M.3 2.2L1.6 .6L2.9 2.2M.3 3.8L1.6 5.4L2.9 3.8" fill="none" stroke="#8e8e8e" stroke-width=".6"/></svg>
<div class="t j b" style="left:12.60px;top:106.80px;color:#f0f0f0;">線</div>
<div class="t j" style="left:40.00px;top:106.80px;color:#bdbdbd;">透明</div>
<svg style="left:280.00px;top:111.00px" width="7.4" height="5.2" viewBox="0 0 7.4 5.2"><path d="M0 .5H7.4M0 2.6H7.4M0 4.7H7.4" stroke="#cfcfcf" stroke-width=".9"/></svg>
<div class="t j" style="left:-57.00px;width:120px;text-align:right;top:129.60px;">線幅 :</div>
<div class="fld" style="left:64.40px;top:128.60px;width:69.00px;height:13.20px;"></div>
<div class="a" style="left:75.60px;top:129.60px;width:1.00px;height:11.20px;background:#5a5a5a;"></div>
<div class="a" style="left:120.60px;top:129.60px;width:1.00px;height:11.20px;background:#5a5a5a;"></div>
<svg style="left:67.20px;top:130.20px" width="5.4" height="10" viewBox="0 0 5.4 10"><path d="M0 3L2.7 .5L5.4 3M0 7L2.7 9.5L5.4 7" fill="none" stroke="#d6d6d6" stroke-width="1"/></svg>
<div class="t" style="left:79.60px;top:129.90px;font-size:9.6px;">1 pt</div>
<svg style="left:124.60px;top:134.20px" width="5.2" height="2.8" viewBox="0 0 5.2 2.8"><path d="M0 0L2.6 2.8L5.2 0" fill="none" stroke="#d6d6d6" stroke-width="1.15"/></svg>
<div class="t j" style="left:-57.00px;width:120px;text-align:right;top:147.60px;">線端 :</div>
<div class="a" style="left:64.40px;top:147.00px;width:13.4px;height:13.4px;background:#2c2c2c;"></div><svg style="left:66.60px;top:149.20px" width="9" height="9" viewBox="0 0 9 9"><rect x="3.8" y="-.4" width="5.2" height="9.8" fill="#fff"/><rect x="3.8" y="4" width="3.6" height="1.2" fill="#2c2c2c"/><rect x="1" y="3.7" width="2.2" height="1.7" fill="#fff"/></svg>
<div class="a" style="left:81.00px;top:147.00px;width:13.4px;height:13.4px;background:transparent;"></div><svg style="left:83.20px;top:149.20px" width="9" height="9" viewBox="0 0 9 9"><path d="M8.4 -.4H4.6A4.9 4.9 0 0 0 4.6 9.4H8.4Z" fill="#d2d2d2"/><rect x="4" y="3.9" width="4.4" height="1.3" fill="#535353"/></svg>
<div class="a" style="left:97.40px;top:147.00px;width:13.4px;height:13.4px;background:transparent;"></div><svg style="left:99.60px;top:149.20px" width="9" height="9" viewBox="0 0 9 9"><rect x="-.2" y="-.4" width="8.6" height="9.8" fill="#d2d2d2"/><rect x="4" y="3.9" width="4.4" height="1.3" fill="#535353"/></svg>
<div class="t j" style="left:-57.00px;width:120px;text-align:right;top:166.60px;">角の形状 :</div>
<div class="a" style="left:64.40px;top:166.00px;width:13.4px;height:13.4px;background:#2c2c2c;"></div><svg style="left:66.60px;top:168.20px" width="9" height="9" viewBox="0 0 9 9"><path d="M0 0H9V4.6H4.6V9H0Z" fill="#e2e2e2"/><path d="M2.2 9V2.2H9" fill="none" stroke="#2c2c2c" stroke-width="1"/><rect x="1.4" y="1.4" width="1.8" height="1.8" fill="#2c2c2c"/></svg>
<div class="a" style="left:81.00px;top:166.00px;width:13.4px;height:13.4px;background:transparent;"></div><svg style="left:83.20px;top:168.20px" width="9" height="9" viewBox="0 0 9 9"><path d="M9 0H4.6A4.6 4.6 0 0 0 0 4.6V9H4.6V4.6H9Z" fill="#d2d2d2"/><path d="M2.2 9V4.4A2.2 2.2 0 0 1 4.4 2.2H9" fill="none" stroke="#535353" stroke-width="1"/></svg>
<div class="a" style="left:97.40px;top:166.00px;width:13.4px;height:13.4px;background:transparent;"></div><svg style="left:99.60px;top:168.20px" width="9" height="9" viewBox="0 0 9 9"><path d="M9 0H4L0 4V9H4.6V4.6H9Z" fill="#d2d2d2"/><path d="M2.2 9V4.6L4.6 2.2H9" fill="none" stroke="#535353" stroke-width="1"/></svg>
<div class="t j" style="left:124.60px;width:120px;text-align:right;top:166.60px;">比率 :</div>
<div class="fld" style="left:246.60px;top:166.00px;width:33.00px;height:12.60px;"></div>
<div class="t" style="left:250.00px;top:167.00px;font-size:9.4px;">10</div>
<div class="t j" style="left:-57.00px;width:120px;text-align:right;top:185.60px;">線の位置 :</div>
<div class="a" style="left:64.40px;top:185.00px;width:13.4px;height:13.4px;background:#2c2c2c;"></div><svg style="left:66.60px;top:187.20px" width="9" height="9" viewBox="0 0 9 9"><path d="M0 0H3.4V5.6H9V9H0Z" fill="#e2e2e2"/><path d="M1.7 0V7.3H9" fill="none" stroke="#2c2c2c" stroke-width=".9"/></svg>
<div class="a" style="left:81.00px;top:185.00px;width:13.4px;height:13.4px;background:transparent;"></div><svg style="left:83.20px;top:187.20px" width="9" height="9" viewBox="0 0 9 9"><path d="M0 0H3.4V5.6H9V9H0Z" fill="#9d9d9d"/><path d="M3.4 0V5.6H9" fill="none" stroke="#e2e2e2" stroke-width="1.2"/></svg>
<div class="a" style="left:97.40px;top:185.00px;width:13.4px;height:13.4px;background:transparent;"></div><svg style="left:99.60px;top:187.20px" width="9" height="9" viewBox="0 0 9 9"><path d="M0 0H3.4V5.6H9V9H0Z" fill="#d2d2d2"/><path d="M3.4 .4V5.6H8.6" fill="none" stroke="#535353" stroke-width=".9"/><path d="M3.4 0H6V3.4H9V5.6H3.4Z" fill="#e2e2e2"/></svg>
<div class="a" style="left:6.60px;top:210.20px;width:8.20px;height:8.40px;border:1px solid #c4c4c4;box-sizing:border-box;background:#4b4b4b;border-radius:1px;"></div>
<div class="t j" style="left:18.00px;top:208.60px;color:#ececec;">破線</div>
<div class="a" style="left:234.00px;top:208.40px;width:26.00px;height:13.40px;border:1px dotted #686868;box-sizing:border-box;"></div>
<div class="a" style="left:262.60px;top:208.40px;width:22.80px;height:13.40px;border:1px dotted #686868;box-sizing:border-box;"></div>
<svg style="left:237.00px;top:211.60px" width="20" height="7" viewBox="0 0 20 7"><path d="M0 3V0H5M8 0H13M16 0H20V3M0 4V7H5M8 7H13M16 7H20V4" fill="none" stroke="#767676" stroke-width="1"/></svg>
<svg style="left:265.40px;top:211.60px" width="17" height="7" viewBox="0 0 17 7"><path d="M0 2.4V0H3M6 0H11M14 0H17V2.4M0 4.6V7H3M6 7H11M14 7H17V4.6" fill="none" stroke="#767676" stroke-width="1"/></svg>
<div class="a" style="left:14.60px;top:227.80px;width:27.40px;height:12.60px;background:#5a5a5a;"></div>
<div class="t" style="left:-31.80px;width:120px;text-align:center;top:228.20px;color:#727272;">0 pt</div>
<div class="t j" style="left:-31.80px;width:120px;text-align:center;top:241.20px;color:#6f6f6f;">線分</div>
<div class="a" style="left:61.80px;top:227.80px;width:27.40px;height:12.60px;background:#5a5a5a;"></div>
<div class="t" style="left:15.40px;width:120px;text-align:center;top:228.20px;color:#727272;">0 pt</div>
<div class="t j" style="left:15.40px;width:120px;text-align:center;top:241.20px;color:#6f6f6f;">間隔</div>
<div class="a" style="left:109.00px;top:227.80px;width:27.40px;height:12.60px;background:#5a5a5a;"></div>
<div class="t" style="left:62.60px;width:120px;text-align:center;top:228.20px;color:#727272;">0 pt</div>
<div class="t j" style="left:62.60px;width:120px;text-align:center;top:241.20px;color:#6f6f6f;">線分</div>
<div class="a" style="left:156.20px;top:227.80px;width:27.40px;height:12.60px;background:#5a5a5a;"></div>
<div class="t" style="left:109.80px;width:120px;text-align:center;top:228.20px;color:#727272;">0 pt</div>
<div class="t j" style="left:109.80px;width:120px;text-align:center;top:241.20px;color:#6f6f6f;">間隔</div>
<div class="a" style="left:203.40px;top:227.80px;width:27.40px;height:12.60px;background:#5a5a5a;"></div>
<div class="t" style="left:157.00px;width:120px;text-align:center;top:228.20px;color:#727272;">0 pt</div>
<div class="t j" style="left:157.00px;width:120px;text-align:center;top:241.20px;color:#6f6f6f;">線分</div>
<div class="a" style="left:250.60px;top:227.80px;width:27.40px;height:12.60px;background:#5a5a5a;"></div>
<div class="t" style="left:204.20px;width:120px;text-align:center;top:228.20px;color:#727272;">0 pt</div>
<div class="t j" style="left:204.20px;width:120px;text-align:center;top:241.20px;color:#6f6f6f;">間隔</div>
<div class="t j" style="left:-57.00px;width:120px;text-align:right;top:263.00px;">矢印 :</div>
<div class="lt" style="left:64.20px;top:261.80px;width:33.20px;height:13.20px;"></div>
<div class="a" style="left:68.20px;top:267.90px;width:25.00px;height:1.10px;background:#111;"></div>
<div class="a" style="left:98.40px;top:261.80px;width:11.20px;height:13.20px;background:#474747;"></div>
<svg style="left:101.40px;top:267.20px" width="5.2" height="2.8" viewBox="0 0 5.2 2.8"><path d="M0 0L2.6 2.8L5.2 0" fill="none" stroke="#d6d6d6" stroke-width="1.15"/></svg>
<div class="lt" style="left:118.00px;top:261.80px;width:33.20px;height:13.20px;"></div>
<div class="a" style="left:122.00px;top:267.90px;width:25.00px;height:1.10px;background:#111;"></div>
<div class="a" style="left:152.20px;top:261.80px;width:11.20px;height:13.20px;background:#474747;"></div>
<svg style="left:155.20px;top:267.20px" width="5.2" height="2.8" viewBox="0 0 5.2 2.8"><path d="M0 0L2.6 2.8L5.2 0" fill="none" stroke="#d6d6d6" stroke-width="1.15"/></svg>
<svg style="left:275.00px;top:265.00px" width="9" height="8" viewBox="0 0 9 8"><path d="M0 2H9M6.6 0L9 2L6.6 4M9 6H0M2.4 4L0 6L2.4 8" fill="none" stroke="#7a7a7a" stroke-width=".9"/></svg>
<div class="t j" style="left:-57.00px;width:120px;text-align:right;top:284.60px;color:#6f6f6f;">倍率 :</div>
<div class="a" style="left:64.20px;top:283.80px;width:45.40px;height:12.60px;background:#5a5a5a;"></div>
<svg style="left:67.00px;top:285.40px" width="5.4" height="9.4" viewBox="0 0 5.4 9.4"><path d="M0 3L2.7 .5L5.4 3M0 6.4L2.7 8.9L5.4 6.4" fill="none" stroke="#747474" stroke-width="1"/></svg>
<div class="t" style="left:78.20px;top:284.60px;color:#727272;font-size:9.4px;letter-spacing:-.3px;">100%</div>
<div class="a" style="left:118.00px;top:283.80px;width:45.40px;height:12.60px;background:#5a5a5a;"></div>
<svg style="left:120.80px;top:285.40px" width="5.4" height="9.4" viewBox="0 0 5.4 9.4"><path d="M0 3L2.7 .5L5.4 3M0 6.4L2.7 8.9L5.4 6.4" fill="none" stroke="#747474" stroke-width="1"/></svg>
<div class="t" style="left:132.00px;top:284.60px;color:#727272;font-size:9.4px;letter-spacing:-.3px;">100%</div>
<svg style="left:274.60px;top:284.00px" width="9" height="13" viewBox="0 0 9 13"><path d="M3 4.4L1.4 6A2 2 0 0 0 4.2 8.8L5.6 7.4M6 8.6L7.6 7A2 2 0 0 0 4.8 4.2L3.4 5.6" fill="none" stroke="#707070" stroke-width="1"/><path d="M1 1L8 12" stroke="#707070" stroke-width=".8"/></svg>
<div class="t j" style="left:-57.00px;width:120px;text-align:right;top:305.20px;color:#6f6f6f;">先端位置 :</div>
<div class="a" style="left:64.40px;top:304.40px;width:13.40px;height:13.40px;background:#595959;"></div>
<div class="a" style="left:81.00px;top:304.40px;width:13.40px;height:13.40px;background:#595959;"></div>
<svg style="left:67.00px;top:307.40px" width="8" height="7" viewBox="0 0 8 7"><path d="M0 3.5H8M5.6 1.4L8 3.5L5.6 5.6M8 0V7" fill="none" stroke="#707070" stroke-width=".8"/></svg>
<svg style="left:83.60px;top:307.40px" width="8" height="7" viewBox="0 0 8 7"><path d="M0 3.5H6M3.8 1.4L6 3.5L3.8 5.6M6 0V7" fill="none" stroke="#707070" stroke-width=".8"/></svg>
<div class="a" style="left:4.00px;top:322.00px;width:285.00px;height:1.00px;background:#5d5d5d;"></div>
<div class="t j" style="left:-57.00px;width:120px;text-align:right;top:329.20px;color:#ececec;">プロファイル :</div>
<div class="lt" style="left:64.20px;top:328.40px;width:70.00px;height:13.20px;"></div>
<div class="a" style="left:69.00px;top:334.50px;width:41.00px;height:1.10px;background:#111;"></div>
<div class="t j" style="left:114.60px;top:329.20px;color:#1c1c1c;">均等</div>
<div class="a" style="left:135.20px;top:328.40px;width:11.60px;height:13.20px;background:#474747;"></div>
<svg style="left:138.40px;top:333.80px" width="5.2" height="2.8" viewBox="0 0 5.2 2.8"><path d="M0 0L2.6 2.8L5.2 0" fill="none" stroke="#d6d6d6" stroke-width="1.15"/></svg>
<svg style="left:257.60px;top:330.60px" width="10" height="9" viewBox="0 0 10 9"><path d="M0 0L4 4.5L0 9ZM10 0L6 4.5L10 9Z" fill="#6a6a6a"/><path d="M5 0V9" stroke="#6a6a6a" stroke-width=".8"/></svg>
<svg style="left:275.40px;top:330.00px" width="9" height="10" viewBox="0 0 9 10"><path d="M0 0L4.5 4L9 0ZM0 10L4.5 6L9 10Z" fill="#6a6a6a"/><path d="M0 5H9" stroke="#6a6a6a" stroke-width=".8"/></svg>
<!--DOCK2-->
<div class="a" style="left:2.00px;top:347.60px;width:289.00px;height:1.40px;background:#3d3d3d;"></div>
<div class="a" style="left:2.00px;top:349.00px;width:289.00px;height:18.40px;background:#424242;"></div>
<div class="a" style="left:41.40px;top:349.60px;width:175.60px;height:17.80px;background:#474747;"></div>
<div class="a" style="left:2.00px;top:349.20px;width:39.40px;height:18.20px;background:#535353;"></div>
<svg style="left:6.00px;top:355.60px" width="3.2" height="6" viewBox="0 0 3.2 6"><path d="M.3 2.2L1.6 .6L2.9 2.2M.3 3.8L1.6 5.4L2.9 3.8" fill="none" stroke="#8e8e8e" stroke-width=".6"/></svg>
<div class="t j b" style="left:12.60px;top:352.60px;color:#f0f0f0;letter-spacing:-.6px;">カラー</div>
<div class="t j" style="left:48.60px;top:352.60px;color:#c2c2c2;letter-spacing:-.64px;">プロパティ</div>
<div class="a" style="left:92.00px;top:350.00px;width:1.00px;height:17.40px;background:#4c4c4c;"></div>
<div class="t j" style="left:99.00px;top:352.60px;color:#c2c2c2;letter-spacing:-.42px;">カラーガイド</div>
<div class="a" style="left:151.00px;top:350.00px;width:1.00px;height:17.40px;background:#4c4c4c;"></div>
<div class="t" style="left:158.00px;top:352.60px;color:#c2c2c2;font-size:8.8px;">CC <span class="j" style="letter-spacing:-.5px;">ライブラリ</span></div>
<div class="a" style="left:217.00px;top:350.00px;width:1.00px;height:17.40px;background:#4c4c4c;"></div>
<svg style="left:280.00px;top:356.20px" width="7.4" height="5.2" viewBox="0 0 7.4 5.2"><path d="M0 .5H7.4M0 2.6H7.4M0 4.7H7.4" stroke="#cfcfcf" stroke-width=".9"/></svg>
<svg style="left:5.80px;top:371.20px" width="9.4" height="9.6" viewBox="0 0 9.4 9.6"><rect x="3" y="3.2" width="5.8" height="5.8" fill="#000" stroke="#e6e6e6" stroke-width="1"/><rect x=".6" y=".6" width="5.4" height="5.4" fill="#fff" stroke="#1a1a1a" stroke-width=".9"/><rect x="2" y="2" width="2.6" height="2.6" fill="#1a1a1a"/></svg>
<svg style="left:19.60px;top:371.00px" width="9" height="10" viewBox="0 0 9 10"><path d="M2 2.6C5.4 2 6.8 4 6.6 7" fill="none" stroke="#d6d6d6" stroke-width="1.1"/><path d="M0 2.8L3 .6V5Z" fill="#d6d6d6"/><path d="M6.6 9.6L4.4 6.4H8.8Z" fill="#d6d6d6"/></svg>
<svg style="left:5.80px;top:385.40px" width="21" height="20.4" viewBox="0 0 21 20.4"><rect x="8" y="7" width="12.4" height="12.8" fill="#000" stroke="#e6e6e6" stroke-width="1"/><rect x="11" y="10.2" width="6.4" height="6.4" fill="#535353" stroke="#e6e6e6" stroke-width="1"/><rect x=".5" y=".5" width="13" height="12.4" fill="#000" stroke="#e6e6e6" stroke-width="1"/></svg>
<div class="t" style="left:38.60px;top:374.80px;">R</div>
<div class="a" style="left:52.00px;top:379.10px;width:78.80px;height:2.80px;background:linear-gradient(90deg,#000,#e01818);border-radius:0 1.4px 1.4px 0;"></div>
<svg style="left:49.40px;top:383.00px" width="5.6" height="4.6" viewBox="0 0 5.6 4.6"><path d="M2.8 0L5.6 3.4V4.6H0V3.4Z" fill="#d2d2d2"/></svg>
<div class="fld" style="left:136.60px;top:374.80px;width:23.60px;height:12.60px;"></div>
<div class="t" style="left:139.40px;top:375.20px;font-size:10px;">0</div>
<div class="t" style="left:38.60px;top:398.00px;">G</div>
<div class="a" style="left:52.00px;top:402.30px;width:78.80px;height:2.80px;background:linear-gradient(90deg,#000,#18d818);border-radius:0 1.4px 1.4px 0;"></div>
<svg style="left:49.40px;top:406.20px" width="5.6" height="4.6" viewBox="0 0 5.6 4.6"><path d="M2.8 0L5.6 3.4V4.6H0V3.4Z" fill="#d2d2d2"/></svg>
<div class="fld" style="left:136.60px;top:398.00px;width:23.60px;height:12.60px;"></div>
<div class="t" style="left:139.40px;top:398.40px;font-size:10px;">0</div>
<div class="t" style="left:38.60px;top:421.40px;">B</div>
<div class="a" style="left:52.00px;top:425.70px;width:78.80px;height:2.80px;background:linear-gradient(90deg,#000,#1818e8);border-radius:0 1.4px 1.4px 0;"></div>
<svg style="left:49.40px;top:429.60px" width="5.6" height="4.6" viewBox="0 0 5.6 4.6"><path d="M2.8 0L5.6 3.4V4.6H0V3.4Z" fill="#d2d2d2"/></svg>
<div class="fld" style="left:136.60px;top:421.40px;width:23.60px;height:12.60px;"></div>
<div class="t" style="left:139.40px;top:421.80px;font-size:10px;">0</div>
<svg style="left:5.80px;top:448.00px" width="27.6" height="9.4" viewBox="0 0 27.6 9.4"><rect x="0" y="0" width="9.2" height="9.4" fill="#fff"/><path d="M.6 8.8L8.6 .6" stroke="#d42020" stroke-width="1.3"/><rect x="9.2" y="0" width="9.2" height="9.4" fill="#000"/><rect x="18.4" y="0" width="9.2" height="9.4" fill="#fff"/></svg>
<div class="t" style="left:220.80px;top:448.20px;border-bottom:1px dotted #9a9a9a;height:11px;line-height:11px;">#</div>
<div class="fld" style="left:229.40px;top:447.40px;width:50.20px;height:12.80px;"></div>
<div class="t" style="left:232.80px;top:448.40px;font-size:10px;">000000</div>
<div class="a" style="left:6.60px;top:465.20px;width:272.60px;height:58.80px;background:linear-gradient(180deg,#fff 0%,rgba(255,255,255,.55) 22%,rgba(255,255,255,0) 52%,rgba(0,0,0,0) 54%,rgba(0,0,0,.55) 78%,#000 100%),linear-gradient(90deg,#ee2626 0%,#ff9a3a 8%,#fff24a 16.6%,#6def3c 33.3%,#6cf2fb 50%,#0a0ae6 66.6%,#f23ee2 83.3%,#f22a4a 94%,#ee2626 100%);outline:1px solid #3e3e3e;"></div>
<div class="a" style="left:2.00px;top:528.00px;width:289.00px;height:3.00px;background:#464646;"></div>
<div class="a" style="left:2.00px;top:531.00px;width:289.00px;height:18.80px;background:#424242;"></div>
<div class="a" style="left:30.80px;top:531.60px;width:82.80px;height:18.20px;background:#474747;"></div>
<div class="a" style="left:2.00px;top:531.20px;width:28.80px;height:18.60px;background:#535353;"></div>
<svg style="left:5.80px;top:537.60px" width="3.2" height="6" viewBox="0 0 3.2 6"><path d="M.3 2.2L1.6 .6L2.9 2.2M.3 3.8L1.6 5.4L2.9 3.8" fill="none" stroke="#8e8e8e" stroke-width=".6"/></svg>
<div class="t j b" style="left:12.40px;top:533.90px;color:#f0f0f0;">文字</div>
<div class="t j" style="left:40.00px;top:533.90px;color:#c2c2c2;">段落</div>
<div class="a" style="left:61.40px;top:532.00px;width:1.00px;height:17.80px;background:#4c4c4c;"></div>
<div class="t" style="left:67.80px;top:533.90px;color:#c2c2c2;font-size:8.6px;letter-spacing:-.05px;">OpenType</div>
<div class="a" style="left:113.60px;top:532.00px;width:1.00px;height:17.80px;background:#4c4c4c;"></div>
<svg style="left:280.00px;top:538.00px" width="7.4" height="5.2" viewBox="0 0 7.4 5.2"><path d="M0 .5H7.4M0 2.6H7.4M0 4.7H7.4" stroke="#8a8a8a" stroke-width=".9"/></svg>
<div class="a" style="left:2.00px;top:549.80px;width:289.00px;height:2.60px;background:#3d3d3d;"></div>
<div class="a" style="left:2.00px;top:552.40px;width:289.00px;height:18.80px;background:#424242;"></div>
<div class="a" style="left:2.00px;top:553.00px;width:130.00px;height:18.20px;background:#474747;"></div>
<div class="a" style="left:30.80px;top:552.60px;width:72.00px;height:18.60px;background:#535353;"></div>
<div class="a" style="left:132.00px;top:553.00px;width:1.00px;height:18.20px;background:#3e3e3e;"></div>
<div class="t j" style="left:8.40px;top:555.30px;color:#c2c2c2;">変形</div>
<div class="t j b" style="left:36.60px;top:555.30px;color:#f0f0f0;letter-spacing:-.44px;">パスファインダー</div>
<div class="t j" style="left:109.60px;top:555.30px;color:#c2c2c2;">整列</div>
<svg style="left:280.00px;top:559.40px" width="7.4" height="5.2" viewBox="0 0 7.4 5.2"><path d="M0 .5H7.4M0 2.6H7.4M0 4.7H7.4" stroke="#cfcfcf" stroke-width=".9"/></svg>
<div class="a" style="left:2.00px;top:571.20px;width:289.00px;height:2.80px;background:#3d3d3d;"></div>
<div class="a" style="left:2.00px;top:574.00px;width:289.00px;height:18.40px;background:#424242;"></div>
<div class="a" style="left:2.00px;top:574.60px;width:43.00px;height:17.80px;background:#535353;"></div>
<div class="t j b" style="left:9.00px;top:577.40px;color:#f0f0f0;letter-spacing:-.5px;">レイヤー</div>
<svg style="left:280.00px;top:581.00px" width="7.4" height="5.2" viewBox="0 0 7.4 5.2"><path d="M0 .5H7.4M0 2.6H7.4M0 4.7H7.4" stroke="#cfcfcf" stroke-width=".9"/></svg>
<div class="a" style="left:10.80px;top:601.00px;width:255.80px;height:14.60px;background:#464646;border:1px solid #404040;box-sizing:border-box;"></div>
<svg style="left:15.60px;top:604.40px" width="7.4" height="8" viewBox="0 0 7.4 8"><circle cx="3" cy="3" r="2.4" fill="none" stroke="#cfcfcf" stroke-width="1"/><path d="M4.8 5L7 7.6" stroke="#cfcfcf" stroke-width="1.1"/></svg>
<div class="t j" style="left:30.80px;top:602.10px;color:#cdcdcd;font-size:8.9px;">すべてを検索</div>
<svg style="left:274.60px;top:603.60px" width="8.6" height="9.6" viewBox="0 0 8.6 9.6"><path d="M0 0H8.6L5.4 4.4V9.6L3.2 8.2V4.4Z" fill="#e2e2e2"/></svg>
<div class="a" style="left:5.80px;top:637.00px;width:282.20px;height:0.60px;background:#4d4d4d;"></div>
<svg style="left:24.40px;top:626.05px" width="7" height="8" viewBox="0 0 7 8"><path d="M1.6 3.6V2.4A1.9 1.9 0 0 1 5.4 2.4V3.6" fill="none" stroke="#d4d4d4" stroke-width="1"/><rect x=".4" y="3.4" width="6.2" height="4.6" rx=".6" fill="#d4d4d4"/><rect x="3" y="4.8" width="1" height="1.8" fill="#555"/></svg>
<div class="a" style="left:36.50px;top:624.00px;width:2.70px;height:12.60px;background:#7be07b;"></div>
<svg style="left:44.40px;top:627.45px" width="3" height="5.6" viewBox="0 0 3 5.6"><path d="M.2 0L2.8 2.8L.2 5.6" fill="none" stroke="#e0e0e0" stroke-width="1.1"/></svg>
<div class="a" style="left:57.40px;top:624.60px;width:11.80px;height:11.60px;background:#fff;border:1px solid #2a2a2a;box-sizing:border-box;"></div>
<div class="t j" style="left:73.40px;top:624.45px;color:#ececec;font-size:8.3px;">外枠</div>
<svg style="left:265.90px;top:627.15px" width="6.2" height="6.2" viewBox="0 0 6.2 6.2"><circle cx="3.1" cy="3.1" r="2.55" fill="none" stroke="#cdcdcd" stroke-width="1"/></svg>
<div class="a" style="left:5.80px;top:651.50px;width:282.20px;height:0.60px;background:#4d4d4d;"></div>
<svg style="left:8.80px;top:642.05px" width="8.4" height="5.4" viewBox="0 0 9.2 6"><path d="M0 3C1.6 .6 3.2 0 4.6 0C6 0 7.6 .6 9.2 3C7.6 5.4 6 6 4.6 6C3.2 6 1.6 5.4 0 3Z" fill="#d4d4d4"/><circle cx="4.6" cy="3" r="1.7" fill="#4a4a4a"/><circle cx="4.6" cy="3" r=".7" fill="#d4d4d4"/></svg>
<svg style="left:24.40px;top:640.55px" width="7" height="8" viewBox="0 0 7 8"><path d="M1.6 3.6V2.4A1.9 1.9 0 0 1 5.4 2.4V3.6" fill="none" stroke="#d4d4d4" stroke-width="1"/><rect x=".4" y="3.4" width="6.2" height="4.6" rx=".6" fill="#d4d4d4"/><rect x="3" y="4.8" width="1" height="1.8" fill="#555"/></svg>
<div class="a" style="left:36.50px;top:638.50px;width:2.70px;height:12.60px;background:#e0584a;"></div>
<svg style="left:44.40px;top:641.95px" width="3" height="5.6" viewBox="0 0 3 5.6"><path d="M.2 0L2.8 2.8L.2 5.6" fill="none" stroke="#e0e0e0" stroke-width="1.1"/></svg>
<div class="a" style="left:57.40px;top:639.10px;width:11.80px;height:11.60px;background:#fff;border:1px solid #2a2a2a;box-sizing:border-box;"></div>
<div class="a" style="left:58.40px;top:641.90px;width:9.80px;height:6.20px;background:#d6481f;"></div>
<div class="t j" style="left:73.40px;top:638.95px;color:#ececec;font-size:8.3px;">裏面</div>
<svg style="left:265.90px;top:641.65px" width="6.2" height="6.2" viewBox="0 0 6.2 6.2"><circle cx="3.1" cy="3.1" r="2.55" fill="none" stroke="#cdcdcd" stroke-width="1"/></svg>
<div class="a" style="left:5.80px;top:652.00px;width:282.20px;height:14.50px;background:#4e6284;"></div>
<svg style="left:283.40px;top:652.00px" width="4.6" height="4.6" viewBox="0 0 4.6 4.6"><path d="M0 0H4.6V4.6Z" fill="#f2f2f2"/></svg>
<svg style="left:8.80px;top:656.55px" width="8.4" height="5.4" viewBox="0 0 9.2 6"><path d="M0 3C1.6 .6 3.2 0 4.6 0C6 0 7.6 .6 9.2 3C7.6 5.4 6 6 4.6 6C3.2 6 1.6 5.4 0 3Z" fill="#d4d4d4"/><circle cx="4.6" cy="3" r="1.7" fill="#4a4a4a"/><circle cx="4.6" cy="3" r=".7" fill="#d4d4d4"/></svg>
<svg style="left:24.40px;top:655.05px" width="7" height="8" viewBox="0 0 7 8"><path d="M1.6 3.6V2.4A1.9 1.9 0 0 1 5.4 2.4V3.6" fill="none" stroke="#d4d4d4" stroke-width="1"/><rect x=".4" y="3.4" width="6.2" height="4.6" rx=".6" fill="#d4d4d4"/><rect x="3" y="4.8" width="1" height="1.8" fill="#555"/></svg>
<div class="a" style="left:36.50px;top:653.00px;width:2.70px;height:12.60px;background:#5a5adf;"></div>
<svg style="left:44.40px;top:656.45px" width="3" height="5.6" viewBox="0 0 3 5.6"><path d="M.2 0L2.8 2.8L.2 5.6" fill="none" stroke="#e0e0e0" stroke-width="1.1"/></svg>
<div class="a" style="left:57.40px;top:653.60px;width:11.80px;height:11.60px;background:#fff;border:1px solid #2a2a2a;box-sizing:border-box;"></div>
<div class="a" style="left:58.40px;top:655.60px;width:9.80px;height:7.60px;background:#f4f4f4;border-top:1px solid #999;border-bottom:1px solid #999;box-sizing:border-box;"></div>
<div class="t j" style="left:73.40px;top:653.45px;color:#ececec;font-size:8.3px;">モニタ額</div>
<svg style="left:265.90px;top:656.15px" width="6.2" height="6.2" viewBox="0 0 6.2 6.2"><circle cx="3.1" cy="3.1" r="2.55" fill="none" stroke="#b9cdf0" stroke-width="1"/></svg>
<div class="a" style="left:5.80px;top:680.50px;width:282.20px;height:0.60px;background:#4d4d4d;"></div>
<svg style="left:8.80px;top:671.05px" width="8.4" height="5.4" viewBox="0 0 9.2 6"><path d="M0 3C1.6 .6 3.2 0 4.6 0C6 0 7.6 .6 9.2 3C7.6 5.4 6 6 4.6 6C3.2 6 1.6 5.4 0 3Z" fill="#d4d4d4"/><circle cx="4.6" cy="3" r="1.7" fill="#4a4a4a"/><circle cx="4.6" cy="3" r=".7" fill="#d4d4d4"/></svg>
<div class="a" style="left:36.50px;top:667.50px;width:2.70px;height:12.60px;background:#5f7fd8;"></div>
<svg style="left:44.40px;top:670.95px" width="3" height="5.6" viewBox="0 0 3 5.6"><path d="M.2 0L2.8 2.8L.2 5.6" fill="none" stroke="#e0e0e0" stroke-width="1.1"/></svg>
<div class="a" style="left:57.40px;top:668.10px;width:11.80px;height:11.60px;background:#fff;border:1px solid #2a2a2a;box-sizing:border-box;"></div>
<div class="t j" style="left:73.40px;top:667.95px;color:#ececec;font-size:8.3px;">表面</div>
<svg style="left:265.90px;top:670.65px" width="6.2" height="6.2" viewBox="0 0 6.2 6.2"><circle cx="3.1" cy="3.1" r="2.55" fill="none" stroke="#cdcdcd" stroke-width="1"/></svg>
<div class="a" style="left:263.20px;top:623.00px;width:0.80px;height:58.00px;background:#4a4a4a;"></div>
<div class="a" style="left:288.00px;top:592.40px;width:3.00px;height:93.60px;background:#4f4f4f;"></div>
<div class="a" style="left:2.00px;top:700.20px;width:290.00px;height:0.80px;background:#3c3c3c;"></div>
<div class="a" style="left:2.00px;top:686.00px;width:289.00px;height:1.00px;background:#484848;"></div>
<div class="t" style="left:5.80px;top:687.60px;color:#dcdcdc;font-size:9.4px;">4<span class="j">レイヤー</span></div>
<svg style="left:156.60px;top:689.60px" width="9.4" height="9" viewBox="0 0 9.4 9"><path d="M0 2.4V0H2.4M5 0H7.4V2.4M0 5V7.4H2.4" fill="none" stroke="#d4d4d4" stroke-width="1"/><path d="M4.6 3.6V9L6.2 7.6L9 7.4Z" fill="#d4d4d4"/></svg>
<svg style="left:173.00px;top:689.60px" width="8.4" height="8.4" viewBox="0 0 8.4 8.4"><path d="M3.4 1.6H.5V7.9H6.8V5" fill="none" stroke="#d4d4d4" stroke-width="1"/><path d="M4.6 .5H7.9V3.8M7.9 .5L3.8 4.6" fill="none" stroke="#d4d4d4" stroke-width="1"/></svg>
<svg style="left:192.00px;top:690.00px" width="7.4" height="8" viewBox="0 0 7.4 8"><circle cx="3" cy="3" r="2.4" fill="none" stroke="#666" stroke-width="1"/><path d="M4.8 5L7 7.6" stroke="#666" stroke-width="1.1"/></svg>
<svg style="left:208.40px;top:689.80px" width="8" height="8" viewBox="0 0 8 8"><rect x=".5" y=".5" width="5.4" height="5.4" fill="none" stroke="#d4d4d4" stroke-width="1"/><rect x="2.4" y="2.4" width="5.2" height="5.2" fill="#8c8c8c" stroke="#d4d4d4" stroke-width="1"/></svg>
<svg style="left:225.60px;top:689.60px" width="12" height="8.4" viewBox="0 0 12 8.4"><path d="M0 0V3.4H2.6" fill="none" stroke="#d4d4d4" stroke-width="1"/><rect x="4.4" y="1.4" width="7" height="6.4" fill="none" stroke="#d4d4d4" stroke-width="1"/><path d="M7.9 3V6.2M6.3 4.6H9.5" stroke="#d4d4d4" stroke-width="1"/></svg>
<svg style="left:246.00px;top:689.80px" width="8" height="8" viewBox="0 0 8 8"><rect x=".5" y=".5" width="7" height="7" fill="none" stroke="#d4d4d4" stroke-width="1"/><path d="M4 2.2V5.8M2.2 4H5.8" stroke="#d4d4d4" stroke-width="1"/></svg>
<svg style="left:263.40px;top:689.20px" width="7.4" height="9" viewBox="0 0 7.4 9"><path d="M0 1.8H7.4M2.6 1.6V.5H4.8V1.6" fill="none" stroke="#d4d4d4" stroke-width="1"/><path d="M.8 2.8H6.6L6.2 9H1.2Z" fill="#d4d4d4"/><path d="M2.8 4V7.8M4.6 4V7.8" stroke="#535353" stroke-width=".7"/></svg>
<!--E:dock-->
</div>

</div>
</body>
</html>
